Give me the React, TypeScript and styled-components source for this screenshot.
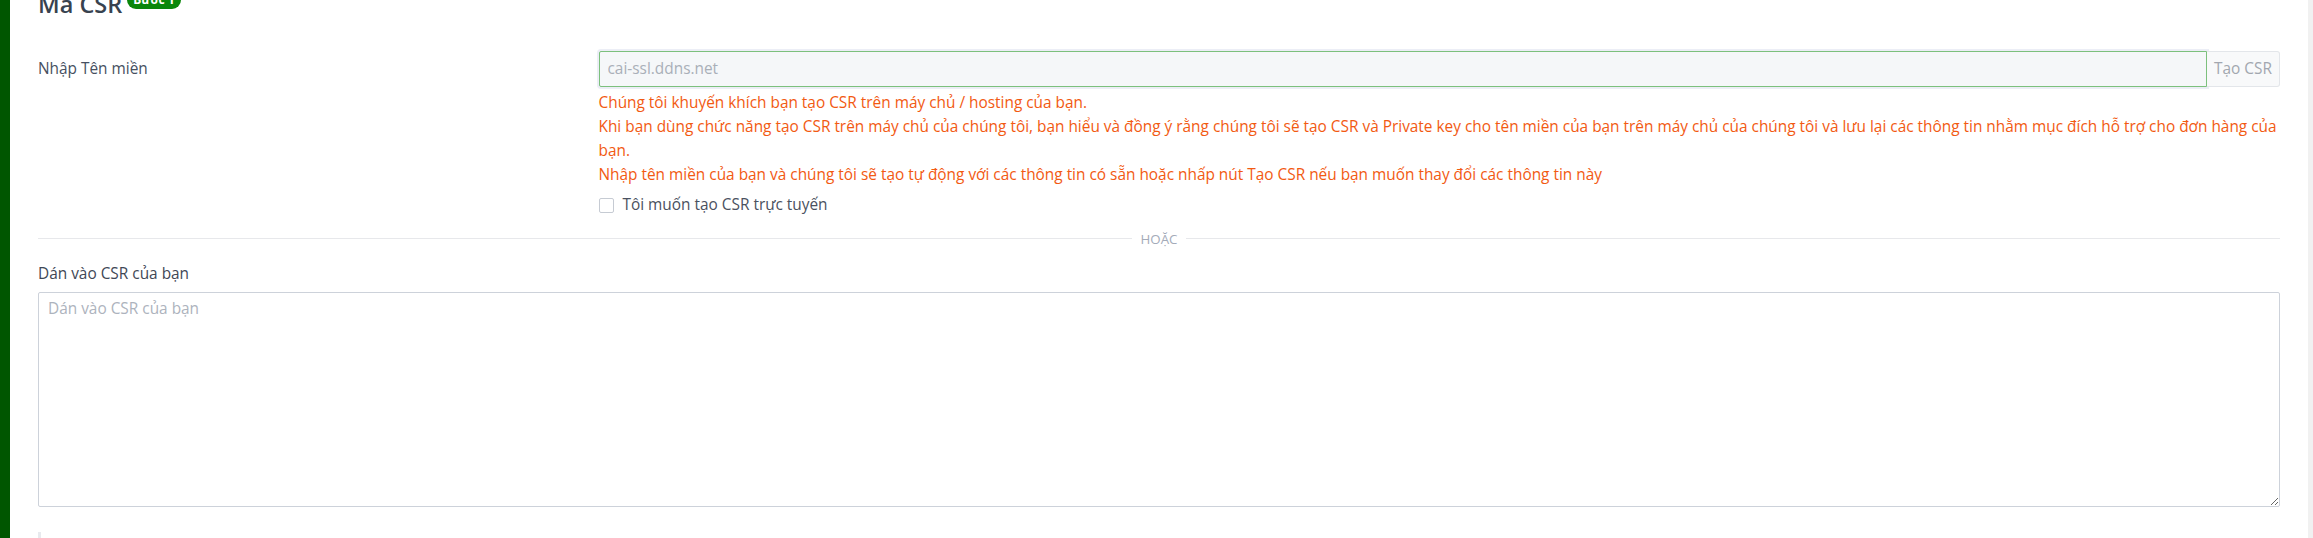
import React from "react";
import styled, { createGlobalStyle } from "styled-components";

const GlobalStyle = createGlobalStyle`
  html, body {
    margin: 0;
    padding: 0;
    background: #ffffff;
    overflow: hidden;
  }
  body {
    font-family: "Open Sans", "Noto Sans", Arial, sans-serif;
    font-size: 15.4px;
    line-height: 24px;
    color: #434c5b;
  }
  * { box-sizing: border-box; }
`;

const Page = styled.div`
  display: flex;
  width: 100%;
  height: 100vh;
  overflow: hidden;
`;

const Sidebar = styled.div`
  flex: 0 0 10px;
  background: #005600;
`;

const Main = styled.main`
  flex: 1 1 auto;
  min-width: 0;
  padding: 0 28px;
`;

const ScrollTrack = styled.div`
  flex: 0 0 5px;
  background: #f1f1f1;
`;

const Header = styled.div`
  display: flex;
  align-items: flex-start;
  gap: 5px;
  margin-top: -9px;
`;

const Title = styled.h2`
  margin: 0;
  font-size: 23.5px;
  line-height: 27.6px;
  font-weight: 600;
  color: #38424f;
`;

const Badge = styled.span`
  display: inline-block;
  margin-top: 0;
  height: 18px;
  padding: 0 6px;
  border-radius: 9px;
  background: #0a870a;
  color: #ffffff;
  font-size: 12px;
  line-height: 18px;
  font-weight: 700;
`;

const FormRow = styled.div<{ $top: number }>`
  display: grid;
  grid-template-columns: 25% 1fr;
  margin-top: ${(p) => p.$top}px;
`;

const RowLabel = styled.label`
  padding-top: 6px;
  color: #465061;
`;

const Field = styled.div`
  display: flex;
  flex-direction: column;
  min-width: 0;
`;

const InputGroup = styled.div`
  display: flex;
  height: 36px;
`;

const DomainInput = styled.input`
  flex: 1 1 auto;
  min-width: 0;
  height: 36px;
  padding: 0 8px;
  border: 1px solid #7cc07d;
  border-radius: 2px 0 0 2px;
  background: #f5f7f9;
  box-shadow: 0 0 0 2px #eceef6;
  color: #a9afb8;
  font: inherit;
  outline: none;
`;

const AddonButton = styled.button`
  flex: 0 0 auto;
  height: 36px;
  padding: 0 7px;
  border: 1px solid #e3e6ea;
  border-left: none;
  border-radius: 0 3px 3px 0;
  background: #f8f9fa;
  color: #a2a7af;
  font: inherit;
  cursor: pointer;
`;

const HelpText = styled.div`
  margin-top: 4px;
  color: #f25a12;
`;

const CheckRow = styled.label`
  display: flex;
  align-items: flex-start;
  margin-top: 6px;
  color: #4a5160;
`;

const Check = styled.input`
  appearance: none;
  flex: 0 0 15px;
  width: 15px;
  height: 15px;
  margin: 5px 9px 0 0;
  border: 1px solid #c6cbd3;
  border-radius: 2px;
  background: #ffffff;
`;

const Divider = styled.div`
  display: flex;
  align-items: center;
  gap: 9px;
  height: 18px;
  margin-top: 13px;
  &::before,
  &::after {
    content: "";
    flex: 1 1 auto;
    height: 1px;
    background: #e7e8eb;
  }
`;

const DividerText = styled.span`
  font-size: 13.3px;
  line-height: 18px;
  color: #a4abb9;
`;

const BlockLabel = styled.label`
  display: block;
  margin-top: 14px;
  color: #3f4856;
`;

const CsrArea = styled.textarea`
  display: block;
  width: 100%;
  height: 215px;
  margin-top: 6px;
  padding: 4px 9px;
  border: 1px solid #cdd2da;
  border-radius: 2px;
  font: inherit;
  color: #434c5b;
  resize: vertical;
  outline: none;
  &::placeholder {
    color: #adb3bd;
  }
`;

const NextSection = styled.div`
  margin-top: 25px;
  height: 30px;
  border-left: 3px solid #e8eaee;
`;

export default function App() {
  return (
    <>
      <GlobalStyle />
      <Page>
        <Sidebar />
        <Main>
          <Header>
            <Title>Mã CSR</Title>
            <Badge>Bước 1</Badge>
          </Header>

          <FormRow $top={32}>
            <RowLabel>Nhập Tên miền</RowLabel>
            <Field>
              <InputGroup>
                <DomainInput readOnly value="cai-ssl.ddns.net" />
                <AddonButton type="button">Tạo CSR</AddonButton>
              </InputGroup>
              <HelpText>
                Chúng tôi khuyến khích bạn tạo CSR trên máy chủ / hosting của bạn.
                <br />
                Khi bạn dùng chức năng tạo CSR trên máy chủ của chúng tôi, bạn hiểu và đồng ý rằng chúng tôi sẽ tạo CSR và Private key cho tên miền của bạn trên máy chủ của chúng tôi và lưu lại các thông tin nhằm mục đích hỗ trợ cho đơn hàng của bạn.
                <br />
                Nhập tên miền của bạn và chúng tôi sẽ tạo tự động với các thông tin có sẵn hoặc nhấp nút Tạo CSR nếu bạn muốn thay đổi các thông tin này
              </HelpText>
              <CheckRow>
                <Check type="checkbox" />
                Tôi muốn tạo CSR trực tuyến
              </CheckRow>
            </Field>
          </FormRow>

          <Divider>
            <DividerText>HOẶC</DividerText>
          </Divider>

          <BlockLabel>Dán vào CSR của bạn</BlockLabel>
          <CsrArea placeholder="Dán vào CSR của bạn" />

          <NextSection />
        </Main>
        <ScrollTrack />
      </Page>
    </>
  );
}
